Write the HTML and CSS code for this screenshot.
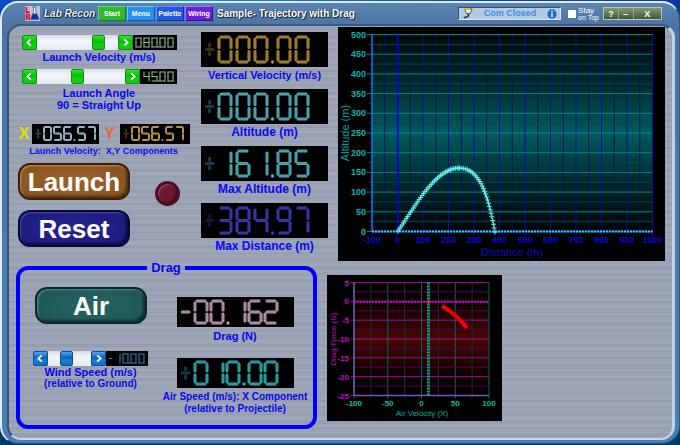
FILE: index.html
```html
<!DOCTYPE html>
<html lang="en">
<head>
<meta charset="utf-8">
<title>Lab Recon</title>
<link rel="stylesheet" href="styles.css">
</head>
<body>
<div class="window">
  <header class="titlebar">
    <svg class="logo" viewBox="0 0 16 16" aria-hidden="true">
      <rect width="16" height="16" fill="#b9c3dc"/>
      <path d="M1.5 1v5.500H5M1.5 15V9h2.500q1.500 1.500 0 3H2M3.500 12l1.500 3" fill="none" stroke="#e0102a" stroke-width="1.800"/>
      <path d="M8 1h4M9 1v5L6 14h9L11.500 6V1" fill="#eef" stroke="#556" stroke-width=".8"/>
      <path d="M8.500 8h3.800L15 14.500H6z" fill="#1a2c9c"/>
    </svg>
    <span class="brand">Lab Recon</span>
    <nav class="menu">
      <button class="tab green">Start</button>
      <button class="tab sky">Menu</button>
      <button class="tab royal">Palette</button>
      <button class="tab violet">Wiring</button>
    </nav>
    <h1 class="title">Sample- Trajectory with Drag</h1>
    <div class="com">
      <svg class="plug" viewBox="0 0 12 12" aria-hidden="true"><path d="M3 1h8L9 6H5z" fill="#f2f2e6" stroke="#333" stroke-width=".8"/><path d="M3 1h6" stroke="#e8d020" stroke-width="1.500"/><path d="M7 6v2q0 2-5 2.500" fill="none" stroke="#333" stroke-width="1.800"/></svg>
      <span class="com-text">Com Closed</span>
      <svg class="info" viewBox="0 0 10 10" aria-hidden="true"><circle cx="5" cy="5" r="4.700" fill="#1b6fd0"/><path d="M5 4.300V8M5 2v1.300" stroke="#fff" stroke-width="1.500"/></svg>
    </div>
    <label class="stay"><input type="checkbox"><span>Stay<br><small>on Top</small></span></label>
    <div class="winbtns">
      <button>?</button><button>–</button><button>X</button>
    </div>
  </header>

  <main class="panel">
    <div class="row top">
      <section class="controls">
        <div class="scroll green-set">
          <button class="arrow" aria-label="Decrease"><svg viewBox="0 0 15 15"><path d="M9 4L5 7.500 9 11"/></svg></button>
          <input type="range" min="0" max="100" value="81" aria-labelledby="l-vel">
          <button class="arrow" aria-label="Increase"><svg viewBox="0 0 15 15"><path d="M6 4l4 3.500L6 11"/></svg></button>
          <svg class="led" viewBox="0 0 44 15" data-size="small" data-x="2" data-value="080.00" data-color="#8cc88c"></svg>
        </div>
        <div class="label" id="l-vel">Launch Velocity (m/s)</div>
        <div class="scroll green-set">
          <button class="arrow" aria-label="Decrease"><svg viewBox="0 0 15 15"><path d="M9 4L5 7.500 9 11"/></svg></button>
          <input type="range" min="0" max="100" value="45" aria-labelledby="l-ang">
          <button class="arrow" aria-label="Increase"><svg viewBox="0 0 15 15"><path d="M6 4l4 3.500L6 11"/></svg></button>
          <svg class="led" viewBox="0 0 37 15" data-size="small" data-x="3" data-value="45.00" data-color="#8cc88c"></svg>
        </div>
        <div class="label" id="l-ang">Launch Angle<br>90 = Straight Up</div>
        <div class="xy">
          <span class="axis x">X</span>
          <svg class="led" viewBox="0 0 67 20" data-size="medium" data-x="11" data-value="056.57" data-sign="plus" data-color="#8fb4c4"></svg>
          <span class="axis y">Y</span>
          <svg class="led" viewBox="0 0 70 20" data-size="medium" data-x="11" data-value="056.57" data-sign="plus" data-color="#b8903c"></svg>
        </div>
        <div class="label tiny">Launch Velocity:&nbsp; X,Y Components</div>
        <div class="actions">
          <div class="stack">
            <button class="big brown">Launch</button>
            <button class="big navy">Reset</button>
          </div>
          <span class="lamp"></span>
        </div>
      </section>

      <section class="readouts">
        <div class="readout">
          <svg class="led" viewBox="0 0 127 35" data-size="large" data-x="17" data-value="000.00" data-sign="plus" data-color="#b08c30"></svg>
          <div class="label">Vertical Velocity (m/s)</div>
        </div>
        <div class="readout">
          <svg class="led" viewBox="0 0 127 35" data-size="large" data-x="17" data-value="000.00" data-sign="plus" data-color="#4fb4c0"></svg>
          <div class="label large">Altitude (m)</div>
        </div>
        <div class="readout">
          <svg class="led" viewBox="0 0 127 35" data-size="large" data-x="17" data-value="161.85" data-sign="plus" data-color="#4fb4c0"></svg>
          <div class="label large">Max Altitude (m)</div>
        </div>
        <div class="readout">
          <svg class="led" viewBox="0 0 127 35" data-size="large" data-x="17" data-value="384.97" data-sign="plus" data-color="#3c3cb8"></svg>
          <div class="label large">Max Distance (m)</div>
        </div>
      </section>

      <svg class="chart" id="altitude" viewBox="0 0 327 234" role="img" aria-label="Altitude (m)"></svg>
    </div>

    <div class="row bottom">
      <fieldset class="drag">
        <legend>Drag</legend>
        <div class="drag-left">
          <button class="big teal">Air</button>
          <div class="scroll blue-set">
            <button class="arrow" aria-label="Decrease"><svg viewBox="0 0 15 15"><path d="M9 4L5 7.500 9 11"/></svg></button>
            <input type="range" min="-50" max="50" value="-10" aria-labelledby="l-wind">
            <button class="arrow" aria-label="Increase"><svg viewBox="0 0 15 15"><path d="M6 4l4 3.500L6 11"/></svg></button>
            <svg class="led" viewBox="0 0 42 15" data-size="small" data-x="8" data-value="10.00" data-sign="minus" data-color="#3484b8"></svg>
          </div>
          <div class="label" id="l-wind">Wind Speed (m/s)</div>
          <div class="label small">(relative to Ground)</div>
        </div>
        <div class="drag-right">
          <svg class="led" viewBox="0 0 117 30" data-size="mid" data-x="17" data-value="00.162" data-sign="minus" data-color="#c09cb8"></svg>
          <div class="label">Drag (N)</div>
          <svg class="led" viewBox="0 0 117 30" data-size="mid" data-x="17" data-value="010.00" data-sign="plus" data-color="#2cb0b4"></svg>
          <div class="label small">Air Speed (m/s): X Component</div>
          <div class="label small">(relative to Projectile)</div>
        </div>
      </fieldset>
      <svg class="chart" id="force" viewBox="0 0 175 146" role="img" aria-label="Drag Force (N)"></svg>
    </div>
  </main>
</div>
<script src="script.js"></script>
</body>
</html>
```

FILE: styles.css
```css
* { box-sizing: border-box; }

body {
  margin: 0;
  min-height: 100vh;
  display: flex;
  padding: 1px 0 1px;
  background: linear-gradient(90deg, #0c4cc0, #1a8cf0 30%, #0a50d0 60%, #0838a0) top / 100% 30px no-repeat, linear-gradient(#0c60b8, #033868);
  font-family: "Liberation Sans", Arial, sans-serif;
  color: #0808f0;
}

button { font-family: inherit; margin: 0; padding: 0; border: 0; }
svg { display: block; }

.window {
  flex: 1;
  display: flex;
  flex-direction: column;
  padding: 0 4px 3px 5px;
  border: 2px solid #dcecf8;
  border-right-color: #35587f;
  border-bottom-color: #2c4c74;
  border-width: 2px 1px 1px 2px;
  border-radius: 18px;
  background: linear-gradient(#5c84b0, #4c74a4 22px, #4c7cb0);
}

.titlebar {
  display: flex;
  align-items: center;
  height: 21px;
  padding: 0 13px 0 18px;
}
.logo { width: 15px; height: 15px; }
.brand {
  width: 58px;
  padding-left: 4px;
  font: italic bold 10px/16px "Liberation Sans", sans-serif;
  color: #e4ecf4;
  text-shadow: 1px 1px 1px #101820, -1px 0 1px #203040;
  white-space: nowrap;
}
.menu { display: flex; gap: 1px; }
.tab {
  width: 28px;
  height: 15px;
  font-size: 7px;
  font-weight: bold;
  color: #fff;
  border: 1px solid;
}
.tab.green { background: #30b830; border-color: #60d860 #108010 #108010 #60d860; }
.tab.sky { background: #2890f0; border-color: #70c0ff #1060b0 #1060b0 #70c0ff; }
.tab.royal { background: #2858e0; border-color: #6090ff #1030a0 #1030a0 #6090ff; }
.tab.violet { background: #6820d8; border-color: #a070ff #3808a0 #3808a0 #a070ff; }
.title {
  margin: 0 auto 0 4px;
  font-size: 10px;
  line-height: 16px;
  color: #fff;
  text-shadow: 1px 1px 1px #101828, -1px 0 1px #304868;
  white-space: nowrap;
}
.com {
  display: flex;
  align-items: center;
  width: 103px;
  height: 13px;
  padding: 0 3px;
  background: #b4cae0;
  border: 1px solid;
  border-color: #38506c #d8e8f4 #d8e8f4 #38506c;
}
.plug { width: 11px; height: 11px; }
.com-text { flex: 1; text-align: center; font-size: 9px; line-height: 11px; color: #3c90f4; font-weight: bold; }
.info { width: 10px; height: 10px; }
.stay { display: flex; align-items: center; gap: 2px; margin: 0 4px 0 7px; color: #fff; font-size: 8px; line-height: 7px; }
.stay input { appearance: none; width: 8px; height: 8px; margin: 0; background: #fff; }
.stay small { font-size: 7px; }
.winbtns { display: flex; width: 59px; height: 13px; border: 1px solid #b8c8b0; }
.winbtns button {
  flex: 1;
  background: linear-gradient(#849870, #40583c);
  border-right: 1px solid #90a488;
  color: #fff;
  font-size: 9px;
  line-height: 10px;
  font-weight: bold;
}
.winbtns button:last-child { flex: 2; border-right: 0; }

.panel {
  flex: 1;
  padding: 1px 7px 7px;
  border: 2px solid;
  border-color: #3c587c #bcd4e8 #c0d8ec #34547c;
  border-right-width: 3px;
  border-radius: 14px;
  background:
    repeating-linear-gradient(rgba(255,255,255,.07) 0 1px, transparent 1px 3px, rgba(50,60,90,.07) 3px 4px, transparent 4px 7px),
    repeating-linear-gradient(rgba(70,80,110,.06) 0 2px, transparent 2px 11px),
    #9ba3b5;
}

.row { display: flex; align-items: flex-start; gap: 10px; }
.top { display: grid; grid-template-columns: 175px 127px 1fr; }
.controls { padding-top: 8px; }

.label {
  font-size: 11px;
  line-height: 12px;
  font-weight: bold;
  text-align: center;
  white-space: nowrap;
}
.label.large { font-size: 12px; }
.label.small { font-size: 10px; }
.label.tiny { font-size: 9px; }
.controls .label { padding: 1px 9px 0 0; }
.controls .label.tiny { padding-right: 0; }
.controls .label + .scroll { margin-top: 6px; }
.controls #l-ang { padding-top: 3px; }

.scroll { display: flex; width: 155px; height: 15px; }
.controls .scroll { margin-left: 6px; }
.arrow { flex: none; width: 15px; height: 15px; border-radius: 2px; }
.arrow path { fill: none; stroke: #fff; stroke-width: 2; }
.green-set { --face: linear-gradient(#28e828, #08b808 45%, #10d010 60%, #18c818); --edge: #109010; }
.blue-set { --face: linear-gradient(#48a8f0, #0860b8 45%, #1880d8 60%, #1070c8); --edge: #0c5098; width: 115px; }
.arrow, input[type="range"]::-webkit-slider-thumb { background: var(--face); border: 1px solid var(--edge); }
input[type="range"] {
  appearance: none;
  flex: 1;
  min-width: 0;
  height: 15px;
  margin: 0;
  background: linear-gradient(#d8dce8, #f4f6fc 40%, #e4e8f2);
}
input[type="range"]::-webkit-slider-thumb {
  appearance: none;
  width: 13px;
  height: 15px;
  border-radius: 2px;
}
.led { background: #000; flex: none; }
.scroll .led { height: 15px; }

.xy { display: flex; align-items: center; margin-top: 13px; }
.xy .led { height: 20px; }
.axis { width: 16px; font-size: 16px; line-height: 20px; font-weight: bold; text-align: center; }
.axis.x { color: #e0e000; }
.axis.y { width: 21px; color: #f46430; }

.actions { display: flex; align-items: center; gap: 25px; margin: 6px 0 0 2px; }
.stack { display: grid; gap: 10px; }
.big {
  width: 112px;
  height: 37px;
  border-radius: 12px;
  font-size: 26px;
  line-height: 30px;
  font-weight: bold;
  color: #fff;
}
.brown { background: radial-gradient(#9c642c, #855020); border: 2px solid #3c2008; box-shadow: inset 1px 1px 2px #c88c50, inset -2px -2px 2px #50300c; }
.navy { background: radial-gradient(#242490, #1a1a78); border: 2px solid #080838; box-shadow: inset 1px 1px 2px #4848b0, inset -2px -2px 2px #0c0c48; }
.teal { background: radial-gradient(#286464, #1c5454); border: 2px solid #082828; box-shadow: inset 1px 1px 2px #509090, inset -2px -2px 2px #0c3434; }
.lamp {
  width: 25px;
  height: 25px;
  margin-bottom: 24px;
  border-radius: 50%;
  border: 3px solid #4c1020;
  background: #6c1834;
  box-shadow: inset 1px 1px 1px #a04868, inset -1px -1px 1px #400818;
}

.readouts { display: grid; gap: 6px; padding-top: 5px; }
.readout .led { width: 127px; height: 35px; }
.readout .label { line-height: 16px; }

.chart { width: 100%; background: #000; font-weight: bold; font-size: 9px; }
.chart .caption { font-weight: normal; font-size: 11px; }
#force { width: 175px; margin-top: 14px; font-size: 8px; }
#force .caption { font-size: 8px; }

.drag {
  display: flex;
  gap: 25px;
  width: 301px;
  min-width: 0;
  height: 168px;
  margin: 0;
  padding: 12px 14px 0 13px;
  border: 4px solid #0000f8;
  border-radius: 12px;
}
.drag legend { margin: 0 auto; padding: 0 4px; font-size: 13px; line-height: 14px; font-weight: bold; }
.drag-left { width: 115px; }
.drag-left .big { display: block; margin: 0 0 27px 2px; }
.drag-right { width: 124px; display: flex; flex-direction: column; align-items: center; padding-top: 10px; }
.drag-right .led { width: 117px; height: 30px; }
.drag-right .label { padding-top: 3px; }
.drag-right .label + .led { margin-top: 16px; }
.drag-right .label + .label { padding-top: 0; }
```

FILE: script.js
```js
const NS = "http://www.w3.org/2000/svg";

function add(parent, name, attrs, text) {
  const el = document.createElementNS(NS, name);
  for (const key in attrs) el.setAttribute(key, attrs[key]);
  if (text !== undefined) el.textContent = text;
  parent.appendChild(el);
  return el;
}

/* Seven-segment indicators: lit segments per digit, a to g. */
const SEGMENTS = {
  0: "abcdef", 1: "bc", 2: "abged", 3: "abgcd", 4: "fgbc",
  5: "afgcd", 6: "afgedc", 7: "abc", 8: "abcdefg", 9: "abcdfg"
};
const SIZES = {
  small: { w: 5, h: 9, top: 3, pitch: 8, dot: 0, stroke: 1, gap: 0 },
  medium: { w: 7, h: 13, top: 3, pitch: 10, dot: 4, stroke: 2, gap: 1 },
  mid: { w: 12, h: 22, top: 4, pitch: 16, dot: 6, stroke: 3, gap: 2 },
  large: { w: 12, h: 25, top: 5, pitch: 18, dot: 5, stroke: 3, gap: 2 }
};

function drawIndicator(svg) {
  const { value, color, size, sign } = svg.dataset;
  const s = SIZES[size];
  let x = Number(svg.dataset.x) + 1;
  const mid = s.top + s.h / 2;
  svg.setAttribute("role", "img");
  svg.setAttribute("aria-label", (sign === "minus" ? "-" : "") + value);
  const line = (x1, y1, x2, y2, opacity = 1) => {
    const pos = { x1, y1, x2, y2, "stroke-linecap": "round", opacity };
    add(svg, "line", { ...pos, stroke: color, "stroke-width": s.stroke });
    if (s.stroke > 2) add(svg, "line", { ...pos, stroke: "#000", "stroke-opacity": .22, "stroke-width": 1 });
  };
  if (sign) {
    const c = x - s.w * .7 - 1, r = s.w * .28;
    if (sign === "minus") line(c - r, mid, c + r, mid);
    else {
      line(c - r, mid, c + r, mid, .35);
      line(c, mid - r - 2, c, mid - r, .35);
      line(c, mid + r, c, mid + r + 2, .35);
    }
  }
  for (const ch of value) {
    if (ch === ".") {
      add(svg, "circle", { cx: x - (s.pitch - s.w) / 2 + s.dot / 2, cy: s.top + s.h, r: Math.max(.8, s.stroke * .55), fill: color });
      x += s.dot;
      continue;
    }
    const r = x + s.w, b = s.top + s.h, g = s.gap;
    const lines = {
      a: [x + g, s.top, r - g, s.top], d: [x + g, b, r - g, b], g: [x + g, mid, r - g, mid],
      f: [x, s.top + g, x, mid - g], b: [r, s.top + g, r, mid - g],
      e: [x, mid + g, x, b - g], c: [r, mid + g, r, b - g]
    };
    for (const seg of SEGMENTS[ch]) line(...lines[seg]);
    x += s.pitch;
  }
}
document.querySelectorAll("svg[data-value]").forEach(drawIndicator);

function gradient(svg, id, stops) {
  const g = add(svg, "linearGradient", { id, x2: 0, y2: 1 });
  stops.forEach(([offset, color]) => add(g, "stop", { offset, "stop-color": color }));
}
function rule(svg, x1, y1, x2, y2, stroke, width = 1, extra = {}) {
  add(svg, "line", { x1, y1, x2, y2, stroke, "stroke-width": width, ...extra });
}

/* Altitude against distance */
(function () {
  const svg = document.getElementById("altitude");
  const L = 34, R = 314.5, T = 7.5, B = 204.5;
  gradient(svg, "sea", [[0, "#000808"], [.25, "#002a2c"], [.5, "#005c60"], [.75, "#002a2c"], [1, "#000404"]]);
  add(svg, "rect", { x: L, y: T, width: R - L, height: B - T, fill: "url(#sea)" });
  for (let i = 0; i <= 22; i++) {
    const x = L + i * (R - L) / 22;
    rule(svg, x, T, x, B + (i % 2 ? 2 : 4), i % 2 ? "#000c60" : "#0808b0");
    if (i % 2 === 0) add(svg, "text", { x, y: 216, fill: "#0808d8", "text-anchor": "middle" }, i * 50 - 100);
  }
  for (let i = 0; i <= 20; i++) {
    const y = B - i * (B - T) / 20;
    rule(svg, L - (i % 2 ? 3 : 5), y, R, y, i % 2 ? "#004448" : "#008488");
    if (i % 2 === 0) add(svg, "text", { x: 28, y: y + 3, fill: "#00b4b4", "text-anchor": "end" }, i * 25);
  }
  rule(svg, L, T, L, B, "#1078e0", 1.5);
  rule(svg, 59.800, T, 59.800, B, "#0000f0", 2, { "stroke-dasharray": "3 1" });
  rule(svg, L, B, R, B, "#0828c0", 2);
  rule(svg, L, B, R, B, "#20d8d8", 2, { "stroke-dasharray": "2 1" });
  const arcs = [
    [[60, 204], [78, 178], [98, 141], [121, 141], 40],
    [[121, 141], [142, 141], [150, 168], [157, 205], 28]
  ];
  let d = "";
  for (const [p0, p1, p2, p3, n] of arcs) {
    for (let i = 0; i <= n; i++) {
      const t = i / n, u = 1 - t;
      const at = k => u * u * u * p0[k] + 3 * u * u * t * p1[k] + 3 * u * t * t * p2[k] + t * t * t * p3[k];
      d += `M${at(0) - 2.5} ${at(1)}h5M${at(0)} ${at(1) - 2.5}v5`;
    }
  }
  add(svg, "path", { d, stroke: "#68f4f0", "stroke-width": 1 });
  add(svg, "text", { x: 174, y: 229, fill: "#0808c8", "text-anchor": "middle", class: "caption" }, "Distance (m)");
  add(svg, "text", { x: 0, y: 0, transform: "translate(11 106) rotate(-90)", fill: "#00a0a4", "text-anchor": "middle", class: "caption" }, "Altitude (m)");
})();

/* Drag force against air velocity */
(function () {
  const svg = document.getElementById("force");
  const L = 27, R = 162, T = 7.5, B = 120.5;
  gradient(svg, "ember", [[0, "#000"], [.2, "#100000"], [.5, "#480800"], [.8, "#100000"], [1, "#000"]]);
  add(svg, "rect", { x: L, y: T, width: R - L, height: B - T, fill: "url(#ember)" });
  for (let i = 0; i <= 8; i++) {
    const x = L + i * (R - L) / 8;
    rule(svg, x, T, x, B + (i % 2 ? 2 : 3), i % 2 ? "#083830" : "#0c6450");
    if (i % 2 === 0) add(svg, "text", { x, y: 131, fill: "#00c098", "text-anchor": "middle" }, i * 25 - 100);
  }
  for (let i = 0; i <= 12; i++) {
    const y = T + i * (B - T) / 12;
    rule(svg, L - (i % 2 ? 2 : 3), y, R, y, i % 2 ? "#500058" : "#9c0c98");
    if (i % 2 === 0) add(svg, "text", { x: 22, y: y + 3, fill: "#d000d0", "text-anchor": "end" }, 5 - i * 2.5);
  }
  rule(svg, L, T, L, B, "#6060b0", 1.5);
  rule(svg, L, B, R, B, "#8050c0", 1.5);
  rule(svg, L, 27, R, 27, "#c000c0", 2, { "stroke-dasharray": "2 1" });
  rule(svg, 101.5, T, 101.5, B, "#10a088", 3, { "stroke-dasharray": "2 1" });
  add(svg, "path", { d: "M99 27h5M101.500 24.500v5", stroke: "#f02020", "stroke-width": 1 });
  add(svg, "path", { d: "M115 31Q128 38 140 53", fill: "none", stroke: "#f80000", "stroke-width": 4 });
  add(svg, "text", { x: 95, y: 141, fill: "#00b494", "text-anchor": "middle", class: "caption" }, "Air Velocity (X)");
  add(svg, "text", { x: 0, y: 0, transform: "translate(9 64) rotate(-90)", fill: "#d000d0", "text-anchor": "middle", class: "caption" }, "Drag Force (N)");
})();
```
